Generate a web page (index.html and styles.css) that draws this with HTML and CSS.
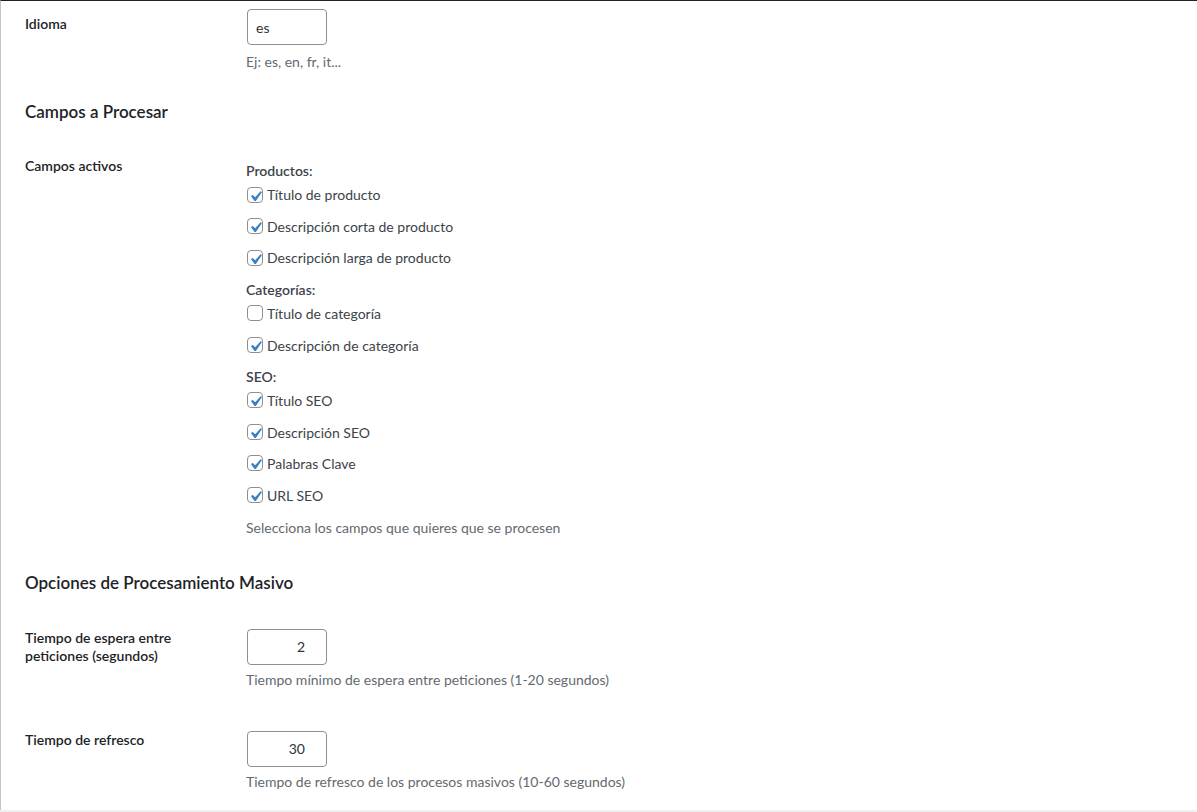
FILE: index.html
```html
<!DOCTYPE html>
<html lang="es">
<head>
<meta charset="utf-8">
<title>Ajustes</title>
<link rel="stylesheet" href="styles.css">
</head>
<body>
<div class="wrap">
  <div class="row row-idioma">
    <div class="th th-idioma">Idioma</div>
    <div class="td">
      <input class="small-text" type="text" value="es">
      <p class="description desc-idioma">Ej: es, en, fr, it...</p>
    </div>
  </div>

  <h2 class="section section-campos">Campos a Procesar</h2>

  <div class="row row-campos">
    <div class="th">Campos activos</div>
    <div class="td td-fieldset">
      <div class="group">Productos:</div>
      <label class="opt"><span class="box"><svg class="check" viewBox="0 0 20 20"><path d="M14.83 4.89l1.34.94-5.81 8.38H9.02L5.78 9.67l1.34-1.25 2.57 2.4z"/></svg></span>Título de producto</label>
      <label class="opt"><span class="box"><svg class="check" viewBox="0 0 20 20"><path d="M14.83 4.89l1.34.94-5.81 8.38H9.02L5.78 9.67l1.34-1.25 2.57 2.4z"/></svg></span>Descripción corta de producto</label>
      <label class="opt"><span class="box"><svg class="check" viewBox="0 0 20 20"><path d="M14.83 4.89l1.34.94-5.81 8.38H9.02L5.78 9.67l1.34-1.25 2.57 2.4z"/></svg></span>Descripción larga de producto</label>
      <div class="group group-next">Categorías:</div>
      <label class="opt"><span class="box"></span>Título de categoría</label>
      <label class="opt"><span class="box"><svg class="check" viewBox="0 0 20 20"><path d="M14.83 4.89l1.34.94-5.81 8.38H9.02L5.78 9.67l1.34-1.25 2.57 2.4z"/></svg></span>Descripción de categoría</label>
      <div class="group group-next">SEO:</div>
      <label class="opt"><span class="box"><svg class="check" viewBox="0 0 20 20"><path d="M14.83 4.89l1.34.94-5.81 8.38H9.02L5.78 9.67l1.34-1.25 2.57 2.4z"/></svg></span>Título SEO</label>
      <label class="opt"><span class="box"><svg class="check" viewBox="0 0 20 20"><path d="M14.83 4.89l1.34.94-5.81 8.38H9.02L5.78 9.67l1.34-1.25 2.57 2.4z"/></svg></span>Descripción SEO</label>
      <label class="opt"><span class="box"><svg class="check" viewBox="0 0 20 20"><path d="M14.83 4.89l1.34.94-5.81 8.38H9.02L5.78 9.67l1.34-1.25 2.57 2.4z"/></svg></span>Palabras Clave</label>
      <label class="opt"><span class="box"><svg class="check" viewBox="0 0 20 20"><path d="M14.83 4.89l1.34.94-5.81 8.38H9.02L5.78 9.67l1.34-1.25 2.57 2.4z"/></svg></span>URL SEO</label>
      <p class="description desc-campos">Selecciona los campos que quieres que se procesen</p>
    </div>
  </div>

  <h2 class="section section-masivo">Opciones de Procesamiento Masivo</h2>

  <div class="row row-espera">
    <div class="th">Tiempo de espera entre peticiones (segundos)</div>
    <div class="td">
      <input class="small-text num" type="text" value="2">
      <p class="description">Tiempo mínimo de espera entre peticiones (1-20 segundos)</p>
    </div>
  </div>

  <div class="row row-refresco">
    <div class="th">Tiempo de refresco</div>
    <div class="td">
      <input class="small-text num" type="text" value="30">
      <p class="description">Tiempo de refresco de los procesos masivos (10-60 segundos)</p>
    </div>
  </div>
</div>
</body>
</html>
```

FILE: styles.css
```css
html, body {
  margin: 0;
  padding: 0;
}

body {
  background: #f0f0f1;
  font-family: "Lato", "Liberation Sans", sans-serif;
  color: #3c434a;
  font-size: 14px;
}

.wrap {
  box-sizing: border-box;
  height: 810px;
  background: #ffffff;
  border-top: 1px solid #1d2327;
  border-left: 1px solid #c3c4c7;
  padding: 0 0 0 24px;
  overflow: hidden;
}

.row {
  display: flex;
  align-items: flex-start;
}

.th {
  box-sizing: border-box;
  width: 221px;
  flex: none;
  padding-right: 20px;
  font-size: 14px;
  font-weight: 600;
  line-height: 18.2px;
  color: #1d2327;
}

.td {
  flex: 1;
}

.row-idioma {
  padding-top: 8px;
}

.th-idioma {
  padding-top: 6px;
}

.small-text {
  display: block;
  box-sizing: border-box;
  width: 80px;
  height: 36px;
  margin: 0 0 0 1px;
  padding: 0 8px;
  border: 1px solid #8c8f94;
  border-radius: 4px;
  background: #ffffff;
  font-family: inherit;
  font-size: 14px;
  color: #2c3338;
  outline: none;
}

.small-text.num {
  text-align: right;
  padding-right: 21px;
}

.description {
  margin: 4.5px 0 0;
  font-size: 14px;
  line-height: 21px;
  color: #646970;
}

.desc-idioma {
  margin-top: 5.5px;
}

.section {
  margin: 0;
  font-size: 17px;
  font-weight: 600;
  line-height: 22px;
  color: #1d2327;
}

.section-campos {
  padding-top: 29px;
}

.row-campos {
  padding-top: 34.5px;
}

.td-fieldset {
  padding-top: 4px;
}

.group {
  font-size: 14px;
  font-weight: 600;
  line-height: 19.6px;
  color: #3c434a;
}

.group-next {
  padding-top: 4.5px;
}

.opt {
  display: flex;
  align-items: center;
  padding: 4.9px 0 7px;
  font-size: 14px;
  line-height: 19.6px;
  color: #3c434a;
}

.box {
  position: relative;
  box-sizing: border-box;
  flex: none;
  width: 16px;
  height: 16px;
  margin: -1px 4px 0 1px;
  border: 1px solid #8c8f94;
  border-radius: 4px;
  background: #ffffff;
}

.check {
  position: absolute;
  left: -3px;
  top: -2px;
  width: 21px;
  height: 21px;
  fill: #3582c4;
}

.desc-campos {
  margin-top: 4.5px;
}

.section-masivo {
  padding-top: 34.2px;
}

.row-espera {
  padding-top: 35px;
}

.row-refresco {
  padding-top: 40.5px;
}
```
